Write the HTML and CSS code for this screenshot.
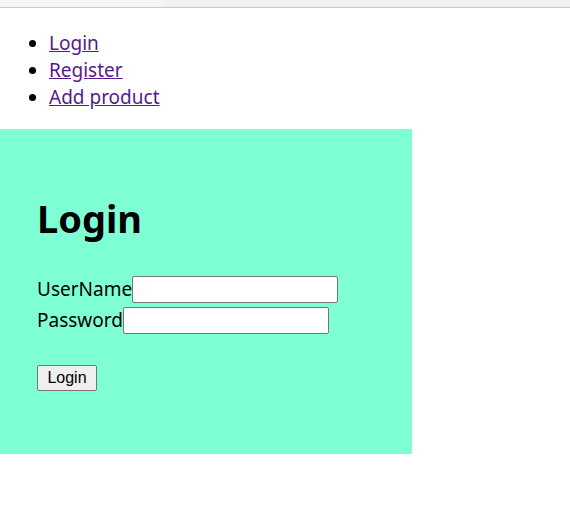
FILE: index.html
```html
<!DOCTYPE html>
<html>
<head>
<meta charset="utf-8">
<link rel="stylesheet" href="styles.css">
</head>
<body>
<div class="chrome"><div class="tab"></div></div>
<ul class="nav">
  <li><a href="#">Login</a></li>
  <li><a href="#">Register</a></li>
  <li><a href="#">Add product</a></li>
</ul>
<div class="panel">
  <h1 class="title">Login</h1>
  <form class="form">
    <div class="row"><label>UserName</label><input class="field" type="text"></div>
    <div class="row"><label>Password</label><input class="field" type="password"></div>
    <div class="actions"><button class="btn" type="button">Login</button></div>
  </form>
</div>
</body>
</html>
```
FILE: styles.css
```css
html, body {
  margin: 0;
  padding: 0;
  background: #fff;
}
body {
  font-family: "Noto Sans", "Open Sans", sans-serif;
  font-size: 19px;
  color: #000;
}
.chrome {
  height: 7px;
  background: #f1f1f1;
  border-bottom: 1px solid #c8c8c8;
  display: flex;
}
.tab {
  width: 165px;
  height: 7px;
  background: #f6f6f6;
  border-radius: 0 0 6px 0;
}
.nav {
  margin: 0;
  padding: 22px 0 18px 49px;
  list-style: disc;
}
.nav li {
  line-height: 27px;
}
.nav a {
  color: #551a8b;
  text-decoration: underline;
}
.panel {
  background: #7fffd4;
  width: 412px;
  height: 325px;
  box-sizing: border-box;
  padding: 64px 37px 0 37px;
}
.title {
  margin: 0 0 31px 0;
  font-size: 38px;
  font-weight: bold;
  line-height: 50px;
}
.row {
  display: flex;
  align-items: center;
  height: 31px;
}
.row label {
  line-height: 27px;
}
.field {
  width: 206px;
  height: 27px;
  box-sizing: border-box;
  border: 1px solid #767676;
  border-radius: 2px;
  background: #fff;
  margin: 0;
  padding: 1px 2px;
}
.actions {
  margin-top: 27px;
}
.btn {
  font-family: "Liberation Sans", Arial, sans-serif;
  font-size: 16px;
  height: 26px;
  width: 60px;
  padding: 0;
  background: #efefef;
  border: 1px solid #767676;
  border-radius: 2px;
  color: #000;
}
```
